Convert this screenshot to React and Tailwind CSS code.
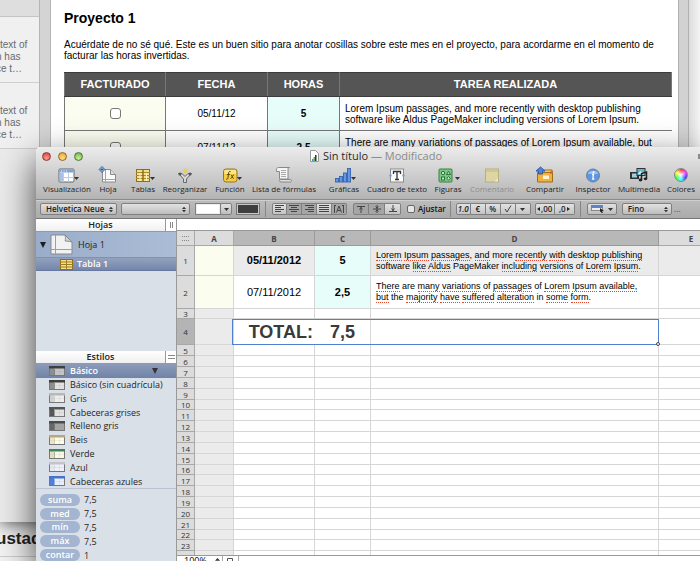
import React from "react";

const lucida = "font-['Open_Sans','Noto_Sans',sans-serif]";
const helv = "font-['Liberation_Sans',Arial,sans-serif]";

/* ---------- Background window ---------- */

function Snippet() {
  return (
    <div className="h-[66px] overflow-hidden border-b border-[#cfcfcf] bg-[#f0f0f0] pt-[22px] text-[10px] leading-[12px] whitespace-nowrap text-[#6a6a6a]">
      <p>text of</p>
      <p className="-ml-1">n has</p>
      <p className="-ml-1">ce t…</p>
    </div>
  );
}

function Invoice() {
  const th = "border border-[#3c3c3c] border-x-[#777] font-bold";
  const td = "border border-[#777]";
  return (
    <section className="min-w-0 flex-1 bg-white pt-[10px] pr-[6px] pl-[13px] text-[10px] leading-[11px] text-black">
      <h1 className="text-[14px] leading-4 font-bold">Proyecto 1</h1>
      <p className="mt-[13px] h-[33px]">
        Acuérdate de no sé qué. Este es un buen sitio para anotar cosillas sobre este mes en el proyecto, para acordarme en el momento de facturar las horas invertidas.
      </p>
      <table className="w-full table-fixed border-collapse">
        <colgroup>
          <col className="w-[101px]" />
          <col className="w-[102px]" />
          <col className="w-[72px]" />
          <col />
        </colgroup>
        <thead>
          <tr className="h-6 bg-[#555] text-[11px] text-white">
            <th className={th}>FACTURADO</th>
            <th className={th}>FECHA</th>
            <th className={th}>HORAS</th>
            <th className={th}>TAREA REALIZADA</th>
          </tr>
        </thead>
        <tbody>
          {[
            ["05/11/12", "5", "Lorem Ipsum passages, and more recently with desktop publishing software like Aldus PageMaker including versions of Lorem Ipsum."],
            ["07/11/12", "2,5", "There are many variations of passages of Lorem Ipsum available, but the majority have suffered alteration in some form."],
          ].map(([date, hours, task]) => (
            <tr key={date} className="h-[34px] text-center">
              <td className={`${td} bg-[#fbfdf0]`}>
                <input type="checkbox" aria-label={`Facturado ${date}`} className="block mx-auto size-[11px] appearance-none rounded-[3px] border border-[#777] bg-white" />
              </td>
              <td className={td}>{date}</td>
              <td className={`${td} bg-[#e6fdfa] font-bold`}>{hours}</td>
              <td className="border-y border-[#777] pr-3 pl-[5px] text-left">{task}</td>
            </tr>
          ))}
        </tbody>
      </table>
    </section>
  );
}

function BackWindow() {
  return (
    <div className={`flex h-[522px] bg-[#f4f4f4] shadow-[0_2px_14px_rgba(0,0,0,0.6)] ${helv}`}>
      <aside className="w-[39px] shrink-0 overflow-hidden bg-[#ebebeb]">
        <div className="h-[17px] border-b border-[#c4c4c4] bg-[#dedede]" />
        <Snippet />
        <Snippet />
      </aside>
      <div className="flex h-[148px] min-w-0 flex-1">
        <div className="w-3 shrink-0 border-x border-[#b5b5b5] bg-[#d4d4d4]" />
        <Invoice />
        <div className="w-[11px] shrink-0 border-x border-[#b0b0b0] bg-[#d2d2d2]" />
        <div className="w-[11px] shrink-0 bg-linear-to-r from-[#dcdcdc] to-[#f4f4f4]" />
      </div>
    </div>
  );
}

/* ---------- Toolbar icons ---------- */

const icons = {
  view: (
    <g>
      <rect x="1" y="3" width="15" height="13" rx="1" fill="#fff" stroke="#666" />
      <rect x="1.5" y="3.5" width="14" height="3" fill="#7da3d6" />
      <rect x="2" y="7" width="3" height="8.5" fill="#a9c2e4" />
      <path d="M5.5 7v9M10.5 7v9M5 11.5h11" stroke="#b9cdea" />
      <path d="M3 5h1M5.500 5h1M8 5h1" stroke="#fff" />
    </g>
  ),
  sheet: (
    <g>
      <path d="M3.500 3.500h8l5 5v7.500h-13z" fill="#fafafa" stroke="#8a8a8a" />
      <path d="M11.500 3.500v5h5" fill="#ddd" stroke="#8a8a8a" />
      <path d="M6.500 4v12M4 13.500h12" stroke="#83a9e0" />
      <path d="M3 .5L5.800 3.500 3 6.500.2 3.500z" fill="#d7e8ff" stroke="#28558f" />
      <path d="M3 2v3M1.500 3.500h3" stroke="#28558f" />
    </g>
  ),
  table: (
    <g>
      <rect x="2.500" y="3.500" width="13" height="12" fill="#f2df8e" stroke="#8c6e1c" />
      <path d="M2 6.500h14M2 9.500h14M2 12.500h14" stroke="#a98930" />
      <path d="M9 3v13" stroke="#8c6e1c" strokeWidth="1.500" />
      <path d="M6 7v8M12.500 7v8" stroke="#fff4b8" />
    </g>
  ),
  sort: (
    <g>
      <path d="M2.500 7.500h3.500l3 3 3-3h3.500l-5 5.500v3.500h-3v-3.500z" fill="#d8d8d8" stroke="#666" />
      <path d="M9 1l1 2 2-.5-1 2 1.500 1.500-2.500.3-1 2-1-2-2.500-.3L8 4.500l-1-2 1.500.5z" fill="#e9cd63" />
      <circle cx="4" cy="8" r="1.500" fill="#555" />
      <circle cx="14" cy="8" r="1.500" fill="#555" />
    </g>
  ),
  fx: (
    <g>
      <rect x="2.500" y="3" width="13.500" height="13" rx="2.500" fill="#f4cd45" stroke="#94771c" />
      <path d="M3.500 4h11.500v4h-11.500z" fill="#fbe68d" />
      <path d="M9.500 5.500c-1.500-.5-1.800.8-2 2.500L7 11.500c-.2 1.700-.8 2-2 1.500M5.800 8.500h3M9.800 8.500c1 0 1.500 4 3 4M13 8.500c-1 0-2 4-3.500 4" stroke="#594507" fill="none" />
    </g>
  ),
  scroll: (
    <g>
      <path d="M1.500 3.500c0-1.500 1-2 2-2h11c-1.200 0-1.500.8-1.500 2V13H4.500V5.500h-3z" fill="#f5f5f5" stroke="#888" />
      <path d="M6 4.500h5M6 6.500h5M6 8.500h5M6 10.500h5" stroke="#aaa" />
      <path d="M5 13.500h10.500c1.500 0 1 2.500 0 2.500H6c-1.500 0-2-1.500-1-2.500z" fill="#ddd" stroke="#888" />
    </g>
  ),
  chart: (
    <g fill="#6597e2" stroke="#3d69b5">
      <rect x=".5" y="12.500" width="3" height="3.500" />
      <rect x="4.500" y="10.500" width="3" height="5.500" />
      <rect x="8.500" y="7" width="3" height="9" />
      <rect x="12.500" y="2.500" width="3" height="13.500" />
    </g>
  ),
  text: (
    <g>
      <rect x="2.500" y="3" width="13" height="13" fill="#fafafa" stroke="#8c8c8c" />
      <path d="M5.500 8V5.500h7V8M9 5.500v8M7 13.500h4" stroke="#333" fill="none" strokeWidth="1.300" />
      <circle cx="2.500" cy="9.500" r="1.200" fill="#6e9edc" />
      <circle cx="15.500" cy="9.500" r="1.200" fill="#6e9edc" />
    </g>
  ),
  shapes: (
    <g>
      <rect x="0" y="3" width="13" height="13" rx="1" fill="#78c883" stroke="#3b8049" />
      <g fill="#bcebc2" stroke="#2f703c">
        <circle cx="4" cy="7" r="1.700" />
        <path d="M9.500 5.300l2 3.200h-4z" />
        <rect x="2.500" y="11" width="3" height="3" />
        <path d="M9.500 10.500l1.800 1.800-1.800 1.800-1.800-1.800z" />
      </g>
    </g>
  ),
  comment: (
    <g>
      <rect x="2.500" y="3" width="13" height="13" fill="#ddd6a4" stroke="#b5ae82" />
      <path d="M3 4h12v2H3z" fill="#cfc791" />
      <path d="M11.500 15.500l3.500-3.500v3.500z" fill="#eee9c4" />
    </g>
  ),
  share: (
    <g>
      <path d="M1.500 6.500h15v9.500h-15z" fill="#f0b13e" stroke="#a06f18" />
      <path d="M2 6.500l2-2.500h12l.5 2.500z" fill="#f6c763" stroke="#a06f18" />
      <rect x="7" y="9.500" width="6" height="3.500" fill="#fff3cf" />
      <path d="M14 5.500h2v2h-2z" fill="#d44" />
      <path d="M4.500 1L9 5H6.500v3h-4V5H0z" fill="#5283d0" stroke="#2f5aa5" />
    </g>
  ),
  info: (
    <g>
      <circle cx="9" cy="9.500" r="6.500" fill="#5f96e0" stroke="#6c7f99" />
      <path d="M3.800 8a5.400 4.500 0 0 1 10.400 0z" fill="#9cc2f2" />
      <circle cx="9.500" cy="6.300" r="1" fill="#fff" />
      <path d="M8 8.500h1.500l-.7 4.500h1.500" stroke="#fff" fill="none" strokeWidth="1.300" />
    </g>
  ),
  media: (
    <g>
      <rect x="0" y="6" width="9" height="7" fill="#333" />
      <rect x="2" y="7.500" width="5" height="4" fill="#9cd3df" />
      <rect x="7" y="2.500" width="8" height="7" fill="#68b5cf" stroke="#333" />
      <path d="M8 8l2.500-3 2 2 1-1 1 2.500z" fill="#e8f4f0" />
      <path d="M11.500 14V7.500l5-1.500v6.500" stroke="#222" fill="none" strokeWidth="1.500" />
      <ellipse cx="10.500" cy="14" rx="1.800" ry="1.400" fill="#222" />
      <ellipse cx="15.500" cy="12.800" rx="1.800" ry="1.400" fill="#222" />
    </g>
  ),
};

function ToolIcon({ name }) {
  if (name === "colors") {
    return <span className="my-[2px] size-[14px] rounded-full border border-[#888] bg-[radial-gradient(circle,#fff_0%,transparent_65%),conic-gradient(#f33,#f3f,#33f,#3ff,#3f3,#ff3,#f33)]" />;
  }
  return (
    <svg viewBox="0 0 18 18" className="size-[18px] overflow-visible" fill="none">
      {icons[name]}
    </svg>
  );
}

const tools = [
  ["view", "Visualización", "w-[52px]", true],
  ["sheet", "Hoja", "w-[30px]"],
  ["table", "Tablas", "w-[40px]", true],
  ["sort", "Reorganizar", "w-[44px]"],
  ["fx", "Función", "w-[46px]", true],
  ["scroll", "Lista de fórmulas", "w-[62px]"],
  ["chart", "Gráficas", "w-[58px]", true],
  ["text", "Cuadro de texto", "w-[48px]"],
  ["shapes", "Figuras", "w-[54px]", true],
  ["comment", "Comentario", "w-[34px]"],
  ["share", "Compartir", "w-[72px]"],
  ["info", "Inspector", "w-[24px]"],
  ["media", "Multimedia", "w-[68px]"],
  ["colors", "Colores", "w-[16px]"],
];

function Toolbar() {
  return (
    <div className="flex h-[34px] pt-px pl-[5px]">
      {tools.map(([icon, label, width, menu]) => (
        <button
          key={label}
          disabled={icon === "comment"}
          className={`flex shrink-0 flex-col items-center text-[8px] leading-[10px] font-medium whitespace-nowrap text-[#1e1e1e] disabled:text-[#8d8d8d] ${width}`}
        >
          <span className="relative flex h-[18px]">
            <ToolIcon name={icon} />
            {menu && (
              <svg viewBox="0 0 5 3" className="absolute -right-[3px] bottom-1 h-[3px] w-[5px]">
                <path d="M0 0h5L2.500 3z" fill="#333" />
              </svg>
            )}
          </span>
          <span>{label}</span>
        </button>
      ))}
    </div>
  );
}

/* ---------- Format bar ---------- */

const ctl = "h-[12px] rounded-[2px] border border-[#7f7f7f] bg-linear-to-b from-[#e2e2e2] to-[#bdbdbd] text-[8px] leading-[10px] text-[#1c1c1c]";

function Select({ label, value, width }) {
  return (
    <span className={`relative flex shrink-0 ${width}`}>
      <select aria-label={label} className={`${ctl} w-full appearance-none pl-[5px] font-semibold`}>
        <option>{value}</option>
      </select>
      <svg viewBox="0 0 5 7" className="pointer-events-none absolute top-[3px] right-1 h-[7px] w-[4px]">
        <path d="M0 2.800L2.500 0 5 2.800zM0 4.200h5L2.500 7z" fill="#333" />
      </svg>
    </span>
  );
}

function Segments({ items, width }) {
  return (
    <div className="flex shrink-0">
      {items.map(({ id, art, on }) => (
        <button
          key={id}
          aria-label={id}
          className={`flex h-[12px] shrink-0 items-center justify-center border-y border-r border-[#7f7f7f] text-[8px] leading-[10px] font-semibold whitespace-nowrap text-[#1c1c1c] first:rounded-l-[2px] first:border-l last:rounded-r-[2px] ${width} ${on ? "bg-[#a5a5a5]" : "bg-linear-to-b from-[#e2e2e2] to-[#c4c4c4]"}`}
        >
          {art}
        </button>
      ))}
    </div>
  );
}

const glyph = (d) => (
  <svg viewBox="0 0 10 8" className="h-2 w-[10px]" fill="none" stroke="#444">
    <path d={d} />
  </svg>
);

const down = (
  <svg viewBox="0 0 5 3" className="h-[3px] w-[5px]">
    <path d="M0 0h5L2.500 3z" fill="#333" />
  </svg>
);

const decimals = (text, arrow, first) => (
  <span className="flex items-center gap-px">
    {!first && text}
    <svg viewBox="0 0 3 4" className="h-1 w-[3px]"><path d={arrow} fill="#222" /></svg>
    {first && text}
  </span>
);

function Divider() {
  return <span className="h-4 w-px shrink-0 bg-[#858585]" />;
}

function FormatBar() {
  return (
    <div className="flex h-5 shrink-0 items-center border-t border-[#8a8a8a] border-b border-b-[#777] bg-linear-to-b from-[#bcbcbc] to-[#ababab] pl-1 shadow-[inset_0_1px_0_#cfcfcf]">
      <Select label="Tipo de letra" value="Helvetica Neue" width="w-[77px]" />
      <span className="w-1" />
      <Select label="Estilo de letra" value="" width="w-[69px]" />
      <div className="ml-[5px] flex shrink-0">
        <button aria-label="Color de relleno" className="h-[12px] w-[26px] border border-[#7f7f7f] bg-[#eee] p-px">
          <span className="block h-full bg-white" />
        </button>
        <button aria-label="Opciones de relleno" className={`${ctl} -ml-px flex w-[12px] items-center justify-center`}>{down}</button>
      </div>
      <button aria-label="Color del texto" className="ml-1 h-[12px] w-[24px] shrink-0 border border-[#777] bg-[#c9c9c9] p-px">
        <span className="block h-full bg-[#3e3e3e]" />
      </button>
      <span className="w-[5px]" />
      <Divider />
      <span className="w-[6px]" />
      <Segments
        width="w-[15px]"
        items={[
          { id: "Izquierda", art: glyph("M0 .5h9M0 2.500h6M0 4.500h9M0 6.500h6") },
          { id: "Centro", on: true, art: glyph("M0 .5h10M2 2.500h6M0 4.500h10M2 6.500h6") },
          { id: "Derecha", on: true, art: glyph("M1 .5h9M4 2.500h6M1 4.500h9M4 6.500h6") },
          { id: "Justificar", art: glyph("M0 .5h10M0 2.500h10M0 4.500h10M0 6.500h10") },
          { id: "Automático", on: true, art: glyph("M.5 0v8M9.500 0v8M2.500 7.500L5 1l2.500 6.500M3.500 5.500h3M0 .5h2M8 .5h2") },
        ]}
      />
      <span className="w-[6px]" />
      <Segments
        width="w-4"
        items={[
          { id: "Arriba", on: true, art: glyph("M1 1.500h8M5 2v6M3.500 4.500L5 2.500l1.500 2") },
          { id: "En medio", on: true, art: glyph("M1 4h8M5 0v8M3.500 1.500L5 3l1.500-1.500M3.500 6.500L5 5l1.500 1.500") },
          { id: "Abajo", art: glyph("M1 6.500h8M5 0v6M3.500 3.500L5 5.500l1.500-2") },
        ]}
      />
      <label className="ml-[6px] flex shrink-0 items-center gap-[3px] text-[8px] leading-[10px] font-semibold text-[#111]">
        <input type="checkbox" className="size-[8px] shrink-0 appearance-none rounded-[2px] border border-[#666] bg-[#e6e6e6]" />
        <span className="whitespace-nowrap">Ajustar</span>
      </label>
      <span className="w-1" />
      <Divider />
      <span className="w-[5px]" />
      <Segments
        width="w-[15px]"
        items={[
          { id: "Número", art: <i>1.0</i> },
          { id: "Moneda", art: "€" },
          { id: "Porcentaje", art: "%" },
          { id: "Casilla", art: glyph("M2 4l2 3 4-6.500") },
          { id: "Más formatos", art: down },
        ]}
      />
      <span className="w-1" />
      <Segments
        width="w-[20px]"
        items={[
          { id: "Aumentar decimales", art: decimals(",00", "M3 0v4L0 2z", true) },
          { id: "Reducir decimales", art: decimals(",0", "M0 0v4l3-2z", false) },
        ]}
      />
      <span className="w-[5px]" />
      <Divider />
      <button aria-label="Bordes" className={`${ctl} ml-[6px] flex w-[30px] shrink-0 items-center justify-between px-[3px]`}>
        <svg viewBox="0 0 13 8" className="h-2 w-[13px]">
          <rect x=".5" y=".5" width="11" height="5" fill="#eee" stroke="#888" />
          <path d="M0 0h12v3H0z" fill="#5c82c9" />
          <path d="M9 3l4 3-2 .3L12 8h-1.500L10 6.500 9 7z" fill="#222" />
        </svg>
        {down}
      </button>
      <span className="w-[5px]" />
      <Select label="Grosor" value="Fino" width="w-[50px]" />
      <span className="ml-[2px] text-[9px] leading-[10px] text-[#555]">…</span>
    </div>
  );
}

/* ---------- Sidebar ---------- */

const styles = [
  ["Básico", "#3f3f3f", "#8e8e8e", "#c4c4c4"],
  ["Básico (sin cuadrícula)", "#3f3f3f", "#8e8e8e", "#e2e2e2"],
  ["Gris", "#b8b8b8", "#d2d2d2", "#eeeeee"],
  ["Cabeceras grises", "#555555", "#555555", "#e2e2e2"],
  ["Relleno gris", "#4c4c4c", "#666666", "#a4a4a4"],
  ["Beis", "#b8a77e", "#efe7c4", "#fdfbea"],
  ["Verde", "#44805a", "#e6e0b8", "#fbf9e6"],
  ["Azul", "#c4c4ca", "#e4e9f6", "#eef1fa"],
  ["Cabeceras azules", "#4773c9", "#4f7fdc", "#e8eefa"],
];

function StyleThumb({ head, side, fill }) {
  return (
    <svg viewBox="0 0 16 10" className="h-[10px] w-4">
      <rect x=".5" y=".5" width="15" height="9" fill={fill} stroke="#777" />
      <rect x="1" y="1" width="4" height="8" fill={side} />
      <rect x="0" y="0" width="16" height="2.500" fill={head} />
      <path d="M5.500 3v6" stroke={head} strokeOpacity=".5" />
      <path d="M10.500 3v6M1 5.500h14" stroke="#888" strokeOpacity=".12" />
    </svg>
  );
}

function PaneHeader({ title, children }) {
  return (
    <div className="flex h-[13px] shrink-0 border-b border-[#999] bg-white text-[9px] leading-[12px] font-semibold text-[#222]">
      <h2 className="flex-1 bg-linear-to-b from-white to-[#f0f0f0] text-center">{title}</h2>
      <span className="flex w-[11px] items-center justify-center border-l border-[#999]">{children}</span>
    </div>
  );
}

function Sidebar() {
  return (
    <aside className="flex w-[140px] shrink-0 flex-col bg-[#dae0e8] text-[9px] text-[#1e1e1e]">
      <PaneHeader title="Hojas">
        <span className="h-[6px] w-[3px] border-x border-[#888]" />
      </PaneHeader>
      <div className="flex h-[25px] shrink-0 items-center bg-linear-to-r from-[#99acc9] to-[#abbdd6] pl-1">
        <svg viewBox="0 0 6 6" className="size-[6px]"><path d="M0 0h6L3 6z" fill="#1d1d1d" /></svg>
        <svg viewBox="0 0 23 21" className="ml-1 h-[21px] w-[23px]" fill="none">
          <path d="M1 1h14l7 7v12H1z" fill="#f2f2f2" stroke="#85898f" />
          <path d="M15 1c1 4 0 6 0 6s3 0 7 1z" fill="#d2d2d2" stroke="#85898f" />
          <path d="M5.500 1v19M1 15.500h21" stroke="#7ba3e6" />
        </svg>
        <span className="ml-[5px]">Hoja 1</span>
      </div>
      <div className="flex h-[14px] shrink-0 items-center border-y border-[#8191b0] border-b-[#6678a0] bg-linear-to-b from-[#93a1be] to-[#7486aa] pl-6 font-semibold text-white">
        <svg viewBox="0 0 13 11" className="h-[11px] w-[13px]">
          <rect x=".5" y=".5" width="12" height="10" fill="#f3df8c" stroke="#8c6e1c" />
          <path d="M0 3h13M0 5.500h13M0 8h13M6.500 0v11" stroke="#a07c20" />
        </svg>
        <span className="ml-1">Tabla 1</span>
      </div>
      <div className="h-[80px] shrink-0" />
      <PaneHeader title="Estilos">
        <span className="h-[4px] w-[7px] border-y border-[#888]" />
      </PaneHeader>
      <ul className="grid h-[124px] shrink-0 grid-rows-9">
        {styles.map(([name, head, side, fill], i) => (
          <li
            key={name}
            className={`flex items-center gap-[5px] pl-[13px] ${i === 0 ? "bg-linear-to-b from-[#8c9bb9] to-[#7083a8] font-semibold text-white" : "font-medium"}`}
          >
            <StyleThumb head={head} side={side} fill={fill} />
            <span className="leading-[13px]">{name}</span>
            {i === 0 && (
              <svg viewBox="0 0 6 6" className="mr-[18px] ml-auto size-[6px]"><path d="M0 0h6L3 6z" fill="#333" /></svg>
            )}
          </li>
        ))}
      </ul>
      <dl className="grid h-[74px] shrink-0 grid-rows-5 border-t border-[#bcc4d4] pt-1 pl-1">
        {[["suma", "7,5"], ["med", "7,5"], ["mín", "7,5"], ["máx", "7,5"], ["contar", "1"]].map(([k, v]) => (
          <div key={k} className="flex items-center gap-1 leading-[11px]">
            <dt className="h-[12px] w-10 rounded-full bg-[#a3b5d0] text-center font-semibold text-white">{k}</dt>
            <dd className="font-medium">{v}</dd>
          </div>
        ))}
      </dl>
    </aside>
  );
}

/* ---------- Sheet ---------- */

function Typo({ children }) {
  return <span className="border-b border-dotted border-[#e8452f]">{children}</span>;
}

function Sheet() {
  const cell = "border-r border-b border-[#d6d6d6]";
  const num = "border-r border-b border-[#a8a8a8] text-[8px] leading-[9px] font-normal text-[#333]";
  const small = Array.from({ length: 20 }, (_, i) => i + 5);
  return (
    <div className="relative h-[324px] shrink-0 overflow-hidden bg-white">
      <table className="w-full table-fixed border-separate border-spacing-0 text-center">
        <colgroup>
          <col className="w-[18px]" />
          <col className="w-[39px]" />
          <col className="w-[81px]" />
          <col className="w-[56px]" />
          <col className="w-[288px]" />
          <col />
        </colgroup>
        <thead>
          <tr className="h-[15px] text-[8px] leading-[9px] text-[#444]">
            <th className="border-r border-b border-[#a8a8a8] bg-[#dcdcdc]">
              <span className="mx-auto block h-[5px] w-[7px] border-y border-dotted border-[#888]" />
            </th>
            <th className="border-r border-b border-[#a8a8a8] bg-[#dcdcdc]">A</th>
            {["B", "C", "D"].map((c) => (
              <th key={c} className="border-r border-b border-[#9a9a9a] bg-[#b8b8b8]">{c}</th>
            ))}
            <th className="border-b border-[#a8a8a8] bg-[#dcdcdc] pl-[23px]">E</th>
          </tr>
        </thead>
        <tbody className={`text-[11px] text-black ${helv}`}>
          <tr className="h-[30px]">
            <th className={`${num} ${lucida} bg-[#dcdcdc]`}>1</th>
            <td className={`${cell} bg-[#fbfdee]`} />
            <td className={`${cell} bg-[#ebebeb] font-bold`}>05/11/2012</td>
            <td className={`${cell} bg-[#e6fdfa] font-bold`}>5</td>
            <td className={`${cell} bg-[#ebebeb] pl-[5px] text-left text-[9px] leading-[11px] whitespace-nowrap`}>
              <Typo>Lorem</Typo> <Typo>Ipsum</Typo> <Typo>passages</Typo>, <Typo>and</Typo> more <Typo>recently</Typo> <Typo>with</Typo> desktop <Typo>publishing</Typo>
              <br />
              software <Typo>like</Typo> <Typo>Aldus</Typo> PageMaker <Typo>including</Typo> <Typo>versions</Typo> of <Typo>Lorem</Typo> <Typo>Ipsum</Typo>.
            </td>
            <td className="border-b border-[#d6d6d6] bg-[#ebebeb]" />
          </tr>
          <tr className="h-[33px]">
            <th className={`${num} ${lucida} bg-[#dcdcdc]`}>2</th>
            <td className={`${cell} bg-[#fbfdee]`} />
            <td className={cell}>07/11/2012</td>
            <td className={`${cell} bg-[#e6fdfa] font-bold`}>2,5</td>
            <td className={`${cell} pl-[5px] text-left text-[9px] leading-[11px] whitespace-nowrap`}>
              <Typo>There</Typo> are <Typo>many</Typo> <Typo>variations</Typo> of <Typo>passages</Typo> of <Typo>Lorem</Typo> <Typo>Ipsum</Typo> <Typo>available,</Typo>
              <br />
              <Typo>but</Typo> the <Typo>majority</Typo> <Typo>have</Typo> <Typo>suffered</Typo> <Typo>alteration</Typo> in <Typo>some</Typo> <Typo>form</Typo>.
            </td>
            <td className="border-b border-[#d6d6d6]" />
          </tr>
          <tr className="h-[10px]">
            <th className={`${num} ${lucida} bg-[#dcdcdc]`}>3</th>
            <td className={`${cell} bg-[#ebebeb]`} />
            <td className={cell} />
            <td className={cell} />
            <td className={cell} />
            <td className="border-b border-[#d6d6d6]" />
          </tr>
          <tr className="h-[26px] text-[18px] leading-5 font-bold text-[#3a3a3a]">
            <th className={`${num} ${lucida} bg-[#b4b4b4]`}>4</th>
            <td className={`${cell} bg-[#ebebeb]`} />
            <td className="border-b border-[#d6d6d6] pr-[2px] text-right">TOTAL:</td>
            <td className={cell}>7,5</td>
            <td className={cell} />
            <td className="border-b border-[#d6d6d6]" />
          </tr>
          {small.map((n) => (
            <tr key={n} className={n % 6 === 4 ? "h-[10px]" : "h-[11px]"}>
              <th className={`${num} ${lucida} bg-[#dcdcdc]`}>{n}</th>
              <td className={`${cell} bg-[#ebebeb]`} />
              <td className={cell} />
              <td className={cell} />
              <td className={cell} />
              <td className="border-b border-[#d6d6d6]" />
            </tr>
          ))}
        </tbody>
      </table>
      <div className="pointer-events-none absolute top-[88px] left-[55px] h-[26px] w-[427px] border border-[#4f80cf]">
        <span className="absolute -right-[2px] -bottom-[2px] size-[4px] rounded-full border border-[#444] bg-white" />
      </div>
    </div>
  );
}

function NumbersWindow() {
  return (
    <main className={`absolute top-[147px] right-0 bottom-0 left-[36px] flex flex-col overflow-hidden rounded-tl-[5px] bg-white ${lucida}`}>
      <header className="shrink-0 bg-linear-to-b from-[#ececec] to-[#b4b4b4]">
        <div className="relative flex h-[18px] items-center justify-center">
          <div className="absolute left-[6px] flex gap-[7px]">
            <button aria-label="Cerrar" className="size-[9px] rounded-full border border-[#8e3a35] bg-[radial-gradient(circle_at_50%_75%,#ff9c94,#d8352e)]" />
            <button aria-label="Minimizar" className="size-[9px] rounded-full border border-[#966523] bg-[radial-gradient(circle_at_50%_75%,#ffe082,#e99a24)]" />
            <button aria-label="Ampliar" className="size-[9px] rounded-full border border-[#4d7a36] bg-[radial-gradient(circle_at_50%_75%,#c9f29a,#62a83e)]" />
          </div>
          <h1 className="flex items-center gap-1 pl-4 text-[11px] leading-[14px] text-[#2b2b2b]">
            <svg viewBox="0 0 9 12" className="h-3 w-[9px]">
              <path d="M.5.5h5l3 3v8h-8z" fill="#fff" stroke="#999" />
              <path d="M2 9h1.500v2H2z" fill="#4a86dd" />
              <path d="M3.500 7H5v4H3.500z" fill="#58b04b" />
              <path d="M5 5h1.500v6H5z" fill="#333" />
            </svg>
            <span>Sin título <span className="text-[#8b8b8b]">— Modificado</span></span>
          </h1>
          <button aria-label="Pantalla completa" className="absolute right-0 h-[5px] w-[2px] bg-[#8a8a8a]" />
        </div>
        <Toolbar />
      </header>
      <FormatBar />
      <div className="flex min-h-0 flex-1">
        <Sidebar />
        <section className="flex min-w-0 flex-1 flex-col border-l border-[#999]">
          <div className="h-3 shrink-0 border-b border-[#999] bg-white" />
          <Sheet />
          <footer className="flex h-4 shrink-0 border-t border-[#999] bg-white text-[9px] leading-[10px] text-black">
            <button className="flex w-[46px] items-start gap-2 border-r border-[#aaa] pl-[7px]">
              100%
              <svg viewBox="0 0 5 7" className="mt-[2px] h-[7px] w-[5px]"><path d="M0 2.800L2.500 0 5 2.800zM0 4.200h5L2.500 7z" fill="#333" /></svg>
            </button>
            <button aria-label="Vista de impresión" className="flex w-[16px] items-start border-r border-[#aaa] pt-[2px] pl-1">
              <svg viewBox="0 0 9 9" className="size-[9px]" fill="#fff" stroke="#555"><path d="M.5.5h5v7h-5zM3.500 3.500h5v5h-5z" /></svg>
            </button>
          </footer>
        </section>
      </div>
    </main>
  );
}

export default function App() {
  return (
    <div className="relative h-screen overflow-hidden bg-[#f2f2f2]">
      <BackWindow />
      <p className={`-ml-1 border-b border-[#ccc] pt-[7px] pb-[7px] text-[17px] leading-5 font-bold text-[#222] ${helv}`}>ustad</p>
      <div className="absolute top-[147px] right-0 bottom-0 left-[36px] rounded-tl-[5px] shadow-[0_14px_36px_rgba(0,0,0,0.75)]" />
      <NumbersWindow />
    </div>
  );
}
